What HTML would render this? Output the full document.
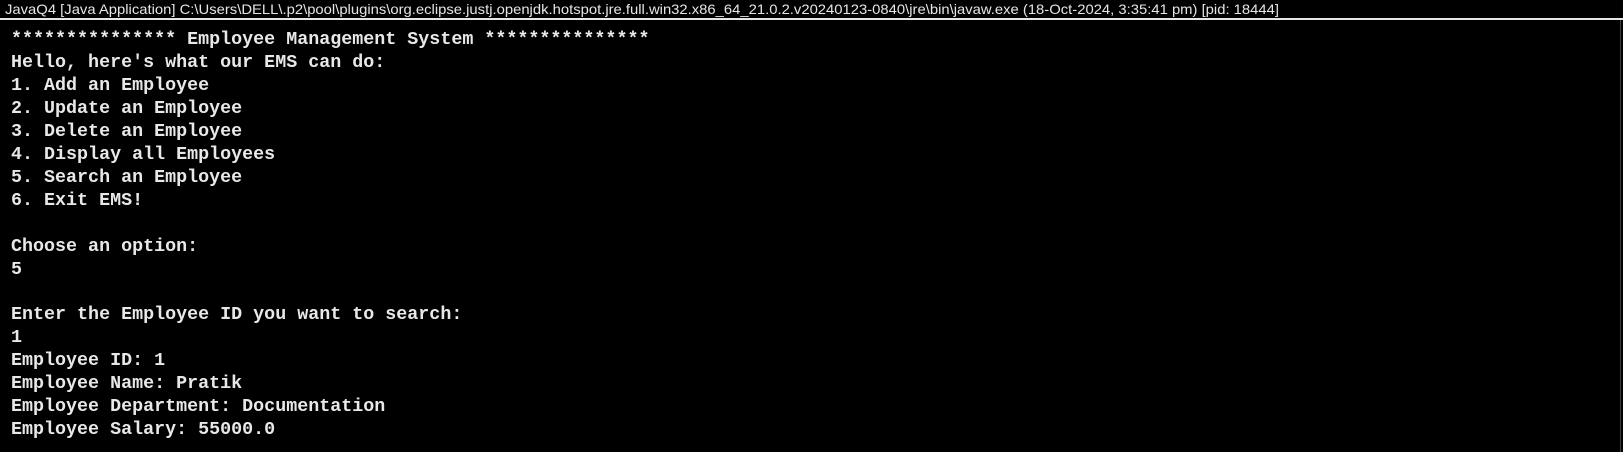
<!DOCTYPE html>
<html><head><meta charset="utf-8"><style>
html,body{margin:0;padding:0;background:#000;width:1623px;height:452px;overflow:hidden;position:relative}
.title{position:absolute;left:0;top:0;width:1623px;height:19px;background:#000}
.line{position:absolute;left:0;top:18px;width:1623px;height:2px;background:#e6e6e6}
.vline{position:absolute;left:1620px;top:20px;width:1px;height:432px;background:#3a3f44}
pre{position:absolute;left:11px;top:29px;margin:0;font-family:"Liberation Mono",monospace;font-weight:bold;font-size:18.35px;line-height:22.95px;color:#e8e8e8}
</style></head><body>
<div class="title"><svg width="1623" height="19" style="position:absolute;left:0;top:0"><text x="5" y="14" font-family="Liberation Sans, sans-serif" font-size="14" fill="#e6e6e6" textLength="1274" lengthAdjust="spacingAndGlyphs">JavaQ4 [Java Application] C:\Users\DELL\.p2\pool\plugins\org.eclipse.justj.openjdk.hotspot.jre.full.win32.x86_64_21.0.2.v20240123-0840\jre\bin\javaw.exe  (18-Oct-2024, 3:35:41 pm) [pid: 18444]</text></svg></div>
<div class="line"></div>
<div class="vline"></div>
<pre>*************** Employee Management System ***************
Hello, here's what our EMS can do:
1. Add an Employee
2. Update an Employee
3. Delete an Employee
4. Display all Employees
5. Search an Employee
6. Exit EMS!

Choose an option:
5

Enter the Employee ID you want to search:
1
Employee ID: 1
Employee Name: Pratik
Employee Department: Documentation
Employee Salary: 55000.0</pre>
</body></html>
